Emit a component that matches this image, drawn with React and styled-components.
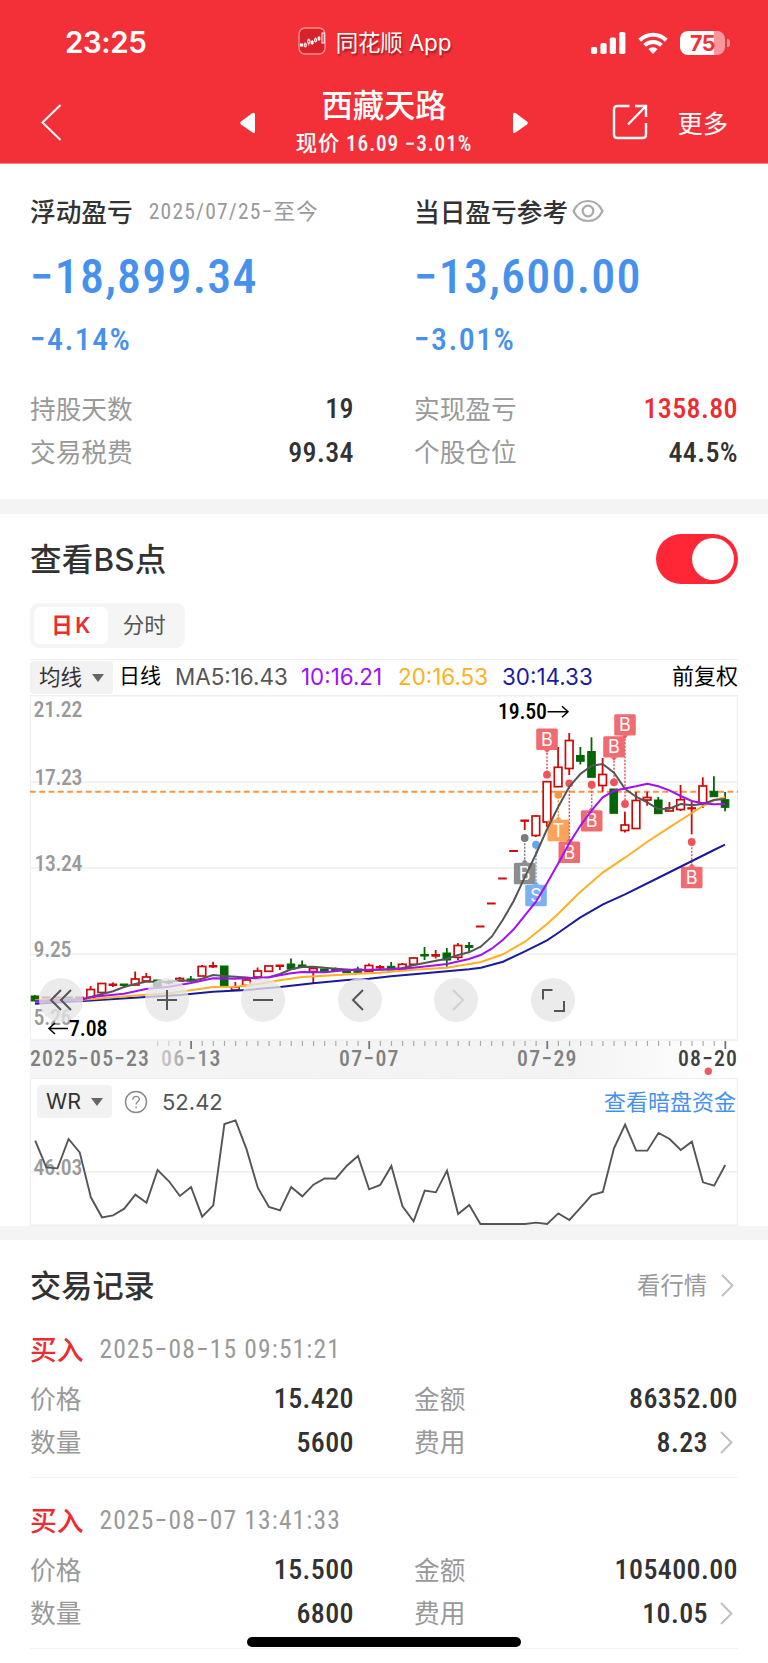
import React from "react";
import styled, { createGlobalStyle } from "styled-components";

const GlobalStyle = createGlobalStyle`
  * {
    box-sizing: border-box;
  }
  body {
    margin: 0;
    background: #fff;
    font-family: Roboto, "Noto Sans CJK SC", sans-serif;
    color: #323232;
  }
`;

const Page = styled.div`
  position: relative;
  width: 768px;
  height: 1663px;
  overflow: hidden;
  background: #fff;
`;

const Header = styled.header`
  height: 164px;
  background: #f33038;
  border-bottom: 1px solid #f88;
  color: #fff;
`;

const StatusBar = styled.div`
  display: grid;
  grid-template-columns: 1fr auto 1fr;
  align-items: center;
  height: 85px;
  padding: 0 38px 0 65px;
`;

const Clock = styled.div`
  padding-bottom: 1px;
  font-family: Inter, sans-serif;
  font-size: 29.5px;
  font-weight: 600;
  letter-spacing: -0.4px;
`;

const AppTag = styled.div`
  display: flex;
  align-items: center;
  gap: 10px;
  padding-bottom: 3px;
  font-family: Inter, "Noto Sans CJK SC", sans-serif;
  font-size: 22.5px;
  letter-spacing: -0.2px;
  text-shadow: 1px 2px 2px rgba(90, 0, 0, 0.55);
  transform: translateX(-23px);
  white-space: nowrap;
  svg {
    display: block;
  }
`;

const StatusIcons = styled.div`
  display: flex;
  justify-content: flex-end;
  align-items: center;
  gap: 12px;
`;

const BatteryBox = styled.div`
  display: flex;
  align-items: center;
  gap: 2px;
  &::after {
    content: "";
    width: 3px;
    height: 8px;
    border-radius: 0 3px 3px 0;
    background: rgba(255, 255, 255, 0.5);
  }
`;

const Battery = styled.div`
  width: 45px;
  height: 24px;
  border-radius: 8px;
  background: linear-gradient(90deg, #fff 76%, rgba(255, 255, 255, 0.5) 76%);
  color: #f33038;
  font: 700 21.5px/24px Inter, sans-serif;
  letter-spacing: -0.6px;
  text-align: center;
`;

const NavBar = styled.div`
  display: grid;
  grid-template-columns: 200px 1fr 200px;
  align-items: center;
  height: 76px;
  padding: 0 40px;
`;

const NavTitle = styled.div`
  display: flex;
  justify-content: space-between;
  align-items: center;
  h1 {
    margin: 0;
    font-size: 31.3px;
    line-height: 40px;
    font-weight: 500;
  }
  p {
    margin: 0;
    font-size: 21.3px;
    line-height: 34px;
    font-weight: 500;
    font-stretch: 85%;
    letter-spacing: 0.9px;
  }
  div {
    padding-top: 2px;
    text-align: center;
  }
`;

const NavActions = styled.div`
  display: flex;
  justify-content: flex-end;
  align-items: center;
  gap: 29px;
  padding-bottom: 2px;
  font-size: 25.3px;
`;

const Split = styled.div`
  display: grid;
  grid-template-columns: 323px 323px;
  column-gap: 61px;
`;

const Summary = styled.section`
  height: 335px;
  padding: 27px 30px 0;
`;

const Caption = styled.div`
  display: flex;
  align-items: center;
  height: 38px;
  font-size: 25.7px;
  font-weight: 500;
  svg {
    margin: 1px 0 0 4px;
  }
`;

const Period = styled.span`
  margin: 0 0 1px 16px;
  font-size: 21.5px;
  font-weight: 400;
  font-stretch: 85%;
  letter-spacing: 1.2px;
  color: #999;
`;

const Amount = styled.div`
  height: 60px;
  margin-top: 18px;
  line-height: 60px;
  font-size: 48px;
  font-weight: 500;
  font-stretch: 85%;
  letter-spacing: 1.2px;
  color: #4691ee;
`;

const Percent = styled.div`
  height: 40px;
  margin: 12px 0 28px;
  line-height: 40px;
  font-size: 32px;
  font-weight: 500;
  font-stretch: 85%;
  letter-spacing: 1.4px;
  color: #4691ee;
`;

const Field = styled.div`
  display: flex;
  align-items: center;
  justify-content: space-between;
  height: 43.5px;
  padding-bottom: 3px;
  font-size: 25.7px;
  color: #999;
`;

const Value = styled.span`
  display: flex;
  align-items: center;
  margin-right: -1px;
  padding-top: 3px;
  font-size: 28px;
  font-weight: 500;
  font-stretch: 85%;
  letter-spacing: 0.4px;
  color: ${(props) => (props.$up ? "#ee2b30" : "#323232")};
  svg {
    margin: 0 5px 0 12px;
  }
`;

const Band = styled.div`
  height: ${(props) => props.$height}px;
  background: #f4f4f4;
`;

const ChartSection = styled.section`
  height: 712px;
  padding: 0 30px;
`;

const SwitchRow = styled.div`
  display: flex;
  align-items: center;
  justify-content: space-between;
  height: 89px;
  font: 500 31.5px Inter, "Noto Sans CJK SC", sans-serif;
`;

const SwitchTitle = styled.span`
  padding-bottom: 4px;
  letter-spacing: 0.2px;
`;

const Switch = styled.div`
  display: flex;
  justify-content: flex-end;
  width: 82px;
  height: 50px;
  padding: 4px;
  border-radius: 25px;
  background: #ff2635;
  &::after {
    content: "";
    width: 42px;
    height: 42px;
    border-radius: 50%;
    background: #fff;
  }
`;

const Tabs = styled.div`
  display: flex;
  width: 155px;
  height: 45px;
  padding: 4px;
  border-radius: 9px;
  background: #f5f5f5;
`;

const Tab = styled.div`
  width: 74px;
  border-radius: 6px;
  background: ${(props) => (props.$on ? "#fff" : "transparent")};
  color: ${(props) => (props.$on ? "#ee2b30" : "#555")};
  font: ${(props) => (props.$on ? 600 : 400)} 21.5px/36px Inter,
    "Noto Sans CJK SC", sans-serif;
  word-spacing: -3px;
  text-align: center;
`;

const Legend = styled.div`
  display: flex;
  align-items: center;
  height: 36px;
  margin-top: 11px;
  border-top: 1.5px solid #eee;
  font: 400 22px/30px Inter, "Noto Sans CJK SC", sans-serif;
  white-space: nowrap;
  color: #000;
`;

const Picker = styled.div`
  display: flex;
  align-items: center;
  justify-content: space-between;
  width: ${(props) => props.$width}px;
  height: 33px;
  padding: 0 9px 2px;
  border-radius: 4px;
  background: #f2f2f2;
  color: #333;
  font-size: 21.5px;
  &::after {
    content: "";
    margin-top: 2px;
    border: 6px solid transparent;
    border-top: 8px solid #666;
    border-bottom: 0;
  }
`;

const Cycle = styled.span`
  width: 62px;
  padding: 0 0 3px 6px;
  font-size: 21px;
`;

const Ma = styled.span`
  width: ${(props) => props.$width}px;
  padding-bottom: 1px;
  font-size: 22.4px;
  color: ${(props) => props.$color};
`;

const Adjust = styled.span`
  margin-left: auto;
  padding-bottom: 3px;
`;

const KLine = styled.div`
  position: relative;
  height: 383px;
`;

/* floating controls over the bottom of the k-line */
const Controls = styled.div`
  position: absolute;
  left: 9px;
  top: 283px;
  display: flex;
  gap: 52.5px;
`;

const RoundButton = styled.div`
  display: flex;
  align-items: center;
  justify-content: center;
  width: 44px;
  height: 44px;
  margin-right: ${(props) => props.$extra || 0}px;
  border-radius: 50%;
  background: rgba(230, 230, 230, 0.78);
`;

const LowPoint = styled.svg`
  position: absolute;
  left: 16px;
  top: 318px;
`;

const Indicator = styled.div`
  position: relative;
  height: 148px;
  > svg {
    display: block;
  }
`;

const IndicatorBar = styled.div`
  position: absolute;
  left: 0;
  top: 7px;
  right: 2px;
  display: flex;
  align-items: center;
  height: 33px;
  padding-left: 7px;
  font: 400 22px Inter, "Noto Sans CJK SC", sans-serif;
  color: #555;
  svg {
    margin: 0 14px 0 12px;
  }
`;

const Link = styled.span`
  margin-left: auto;
  padding-bottom: 4px;
  color: #4691ee;
`;

const Records = styled.section`
  padding: 0 30px;
`;

const RecordsHead = styled.div`
  display: flex;
  align-items: center;
  height: 67px;
  padding-top: 21px;
  h2 {
    margin: 0;
    padding-bottom: 2px;
    flex: 1;
    font-size: 31.2px;
    font-weight: 500;
  }
  span {
    font-size: 23.3px;
    color: #999;
  }
  svg {
    margin: 2px 4px 0 14px;
  }
`;

const Record = styled.div`
  height: 171px;
  padding-top: 24px;
  border-bottom: 1.5px solid #f3f3f3;
`;

const RecordHead = styled.div`
  display: flex;
  align-items: center;
  height: 36px;
  margin-bottom: 10px;
  b {
    margin-right: 16px;
    padding-bottom: 2px;
    font-size: 26.8px;
    font-weight: 500;
    color: #ee2b30;
  }
  span {
    font-size: 25.5px;
    font-stretch: 85%;
    letter-spacing: 1.15px;
    color: #999;
  }
`;

const HomeBar = styled.div`
  position: absolute;
  left: 247px;
  bottom: 16px;
  width: 274px;
  height: 10px;
  border-radius: 5px;
  background: #000;
`;

const STEP = 11.13;
const RED = "#cc0a0a";
const GREEN = "#046504";

// [up, high, body top, body bottom, low]
const CANDLES = [
  [0, 995, 996, 1001, 1001], [1, 997, 997, 998, 998], [1, 997, 997, 998, 998],
  [0, 997, 997, 998, 998], [1, 997, 997, 998, 998], [1, 986, 989.5, 998, 998],
  [1, 983, 983.5, 992.5, 993], [1, 982.5, 984, 985.5, 987], [0, 984, 984, 985.5, 988],
  [1, 971.5, 979, 985, 985], [1, 973, 977, 981, 981], [0, 980, 980, 987, 987],
  [0, 980, 981.5, 983, 984.5], [1, 977, 978.5, 981, 981], [0, 976, 979, 981, 981],
  [1, 965, 966.5, 976, 976], [1, 961.7, 965.5, 967, 968], [0, 966, 966, 985.7, 986],
  [1, 982, 987, 990, 990], [1, 978, 980, 985.5, 986], [1, 967.5, 971, 977, 977],
  [1, 966, 966, 971.3, 971], [1, 965, 965, 966.5, 970], [0, 958.5, 964, 969, 969],
  [0, 960.5, 965, 967, 967], [1, 968, 968.5, 971.5, 983], [0, 969, 969, 971.7, 972],
  [0, 967.5, 969, 970.5, 971], [0, 969, 969.5, 972.7, 973], [0, 966.7, 969, 972.3, 973],
  [1, 963.5, 965.5, 971.5, 972], [1, 965, 966.5, 968, 969], [0, 962, 966.3, 970, 970],
  [1, 963, 964.3, 970, 970], [1, 957, 958, 964.3, 964.3], [0, 947, 954.5, 956, 960],
  [1, 950, 954.5, 956.2, 958.5], [0, 948, 953, 960, 966.7], [1, 943, 945.5, 957.3, 960],
  [0, 942, 945.5, 947.5, 951.7], [1, 926, 926, 927, 927], [1, 903, 903, 904, 904],
  [1, 878, 878, 879, 879], [1, 850.5, 850.5, 851.5, 851], [1, 820, 820, 821.3, 830],
  [1, 815, 816, 835.5, 837], [1, 781, 781.7, 822, 827], [1, 747, 767.3, 786.7, 787],
  [1, 733, 740.5, 768.5, 775], [0, 747, 755.5, 761.3, 764.5], [0, 737.3, 751.5, 777.3, 777],
  [1, 758, 774.5, 785.5, 791.7], [0, 789, 789, 813.3, 813], [1, 811.7, 825, 830.5, 832.5],
  [1, 792, 800.5, 828.5, 829], [1, 791.7, 797.5, 800, 805.7], [0, 797, 800, 813.7, 813],
  [1, 802, 808, 811, 811], [1, 785, 799.7, 809.5, 811], [1, 801.7, 807.7, 809, 834.3],
  [1, 777.3, 786, 803, 808], [0, 776.3, 791.3, 796.7, 796], [0, 792, 799.7, 807.3, 811.3],
];

const AVERAGES = [
  {
    color: "#1a1aa0",
    points:
      "35,1003.7 83,1001 146,997 180,995 213,991.7 247,990 280,987 313,983.3 347,980 369,978.7 391,976.3 425,973.3 469,969.3 481,967.7 503,961.7 525,951.3 547,940.3 558,933 580,917.7 603,904.3 625,894.3 658,878 692,861 714,850 725,844.7",
  },
  {
    color: "#ffb020",
    points:
      "35,1000.3 83,999.7 146,994.7 169,993.3 191,990.3 213,987 235,986.7 258,984 280,980.3 302,977 325,975.7 358,973.7 380,972.7 413,969.7 447,967.7 481,962 503,954.3 525,941.7 547,924 558,914 580,892.3 603,872.3 625,857.7 647,842 669,827.7 692,813 703,806 714,800.3 725,797",
  },
  {
    color: "#555",
    points:
      "35,1001 83,999 91,997 113,991.3 124,987 135,984 146,981.7 169,981.7 180,980.3 191,981 202,978.7 213,975 224,976 247,977.5 258,978.7 269,977.3 280,974 291,969.3 302,967 313,966.7 336,968.7 358,970.3 380,969.7 402,968.3 413,965.3 436,960.7 447,958.7 458,955 469,952.3 480.7,946.7 491.7,936.7 502.7,920 513.7,901 524.7,877.3 536,854 547,829.3 558.3,806.7 569.3,786.7 580.3,774 591.7,765.7 602.7,764 614,772.7 625,788.7 636,796.7 647.3,802.3 658.3,809 669.3,808.7 680.7,804 691.7,805.3 702.7,804 714,800 725,799",
  },
  {
    color: "#a010f8",
    points:
      "35,1001.7 83,999.3 91,997 124,993.7 146,989 169,986.7 191,983 213,978.3 235,978.7 269,977.3 291,973.3 302,972 325,972.3 347,970 369,969.7 391,969.3 413,967.7 436,965.3 447,964 469,959 480.7,955 491.7,948.7 502.7,940 513.7,929.3 524.7,915.7 536,901.7 547,883.3 558.3,863.3 569.3,843.3 580.3,825.7 591.7,810.3 602.7,797.3 614,790.7 636,786.3 647.3,783.7 658.3,786.3 669.3,790.3 680.7,796 691.7,801 702.7,803.3 714,804.3 725,804",
  },
];

// letter, x, box centre y, dot y, colour
const MARKS = [
  ["B", 524.7, 873.3, 838, "#7b7b7b"],
  ["S", 536, 895.3, 844.7, "#66a5f2"],
  ["B", 547, 739, 774.7, "#ee5459"],
  ["T", 558.3, 830.3, 794.7, "#ff9440"],
  ["B", 569.3, 852, 783.3, "#ee5459"],
  ["B", 591.7, 820.7, 784.7, "#ee5459"],
  ["B", 614, 746.7, 782.3, "#ee5459"],
  ["B", 625, 724.7, 804, "#ee5459"],
  ["B", 691.7, 877.3, 842, "#ee5459"],
];

const WR = [
  212, 292, 295, 207, 247, 382, 442, 436, 416, 374, 398, 300, 333, 378, 351,
  440, 406, 162, 151, 239, 353, 411, 421, 351, 379, 344, 325, 326, 287, 258,
  358, 345, 288, 409, 454, 362, 367, 302, 432, 405, 462, 462, 462, 462, 462,
  458, 462, 430, 450, 413, 375, 366, 235, 164, 242, 242, 189, 207, 240, 215,
  337, 347, 285,
];

const RECORDS = [
  { time: "2025−08−15 09:51:21", price: "15.420", count: "5600", total: "86352.00", fee: "8.23" },
  { time: "2025−08−07 13:41:33", price: "15.500", count: "6800", total: "105400.00", fee: "10.05" },
];

const Chevron = () => (
  <svg width="13" height="23" viewBox="0 0 13 23" fill="none">
    <path d="M1 1l10.5 10.5L1 22" stroke="#bdbdbd" strokeWidth="1.8" />
  </svg>
);

const ChartText = styled.text`
  font-family: Roboto, sans-serif;
  font-size: 21.8px;
  font-weight: 500;
  font-stretch: 85%;
`;

const Label = ({ x, y, width, fill = "#999", children }) => (
  <ChartText x={x} y={y} textLength={width} fill={fill}>
    {children}
  </ChartText>
);

const Candle = ({ index, data }) => {
  const [up, high, top, bottom, low] = data;
  const x = 35 + STEP * index;
  const color = up ? RED : GREEN;
  const hollow = up && bottom - top > 2.2;
  return (
    <g stroke={color} strokeWidth="1.8">
      {high < top && <line x1={x} x2={x} y1={high} y2={top} />}
      {low > bottom && <line x1={x} x2={x} y1={bottom} y2={low} />}
      <rect
        x={x - 3.8}
        y={top}
        width="7.6"
        height={bottom - top}
        fill={hollow ? "#fff" : color}
        strokeWidth={hollow ? 1.7 : 1}
      />
    </g>
  );
};

const Mark = ({ data }) => {
  const [letter, x, y, dot, color] = data;
  const dir = dot > y ? 1 : -1;
  const edge = y + dir * 10.5;
  return (
    <g>
      <line
        x1={x}
        x2={x}
        y1={edge}
        y2={dot}
        stroke={color}
        strokeWidth="1.5"
        strokeDasharray="2 1.5"
      />
      <circle cx={x} cy={dot} r="3.9" fill={color} />
      <g fill={color} opacity="0.86">
        <rect x={x - 10.8} y={y - 10.5} width="21.6" height="21.4" rx="1.5" />
        <path d={`M${x - 3.5} ${edge}h7l-3.5 ${dir * 3.5}z`} />
      </g>
      <text
        x={x}
        y={y + 6.7}
        textAnchor="middle"
        fontFamily="Inter, sans-serif"
        fontSize="18"
        fill="#fff"
      >
        {letter}
      </text>
    </g>
  );
};

const KLineChart = () => (
  <svg width="708" height="383" viewBox="30 695 708 383">
    <defs>
      <linearGradient id="axis">
        <stop offset="0" stopColor="#f5f5f5" />
        <stop offset="0.75" stopColor="#f3f3f3" />
        <stop offset="1" stopColor="#fff" />
      </linearGradient>
      <linearGradient id="fade" gradientUnits="userSpaceOnUse" x1="160" x2="210">
        <stop offset="0" stopColor="#ccc" />
        <stop offset="1" stopColor="#808080" />
      </linearGradient>
    </defs>
    <rect x="30" y="1040" width="708" height="39" fill="url(#axis)" />
    <g stroke="#eee" strokeWidth="1.5" fill="none">
      <rect x="30.2" y="695.7" width="707.3" height="344.3" />
      <path d="M30 782h708M30 868h708M30 954.3h708" />
    </g>
    <line x1="30" x2="738" y1="791.7" y2="791.7" stroke="#ff9440" strokeWidth="2" strokeDasharray="5.8 3.5" />
    <Label x={33.5} y={717.3} width={49}>21.22</Label>
    <Label x={34.5} y={785} width={48}>17.23</Label>
    <Label x={34.5} y={871} width={48}>13.24</Label>
    <Label x={33.5} y={957.3} width={38}>9.25</Label>
    <Label x={33.5} y={1025} width={38}>5.26</Label>
    {CANDLES.map((item, i) => (
      <Candle key={i} index={i} data={item} />
    ))}
    {MARKS.map((item, i) => (
      <Mark key={i} data={item} />
    ))}
    {AVERAGES.map((line) => (
      <polyline key={line.color} points={line.points} fill="none" stroke={line.color} strokeWidth="2" />
    ))}
    <Label x={498} y={719} width={49} fill="#000">19.50</Label>
    <path d="M547.5 711.7h20.5M562 706.2l6 5.5-6 5.5" fill="none" stroke="#000" strokeWidth="1.5" />
    {Array.from({ length: 52 }, (_, k) => k + 11).map((i) => {
      const major = i % 16 === 14;
      return (
        <line
          key={i}
          x1={35.3 + STEP * i}
          x2={35.3 + STEP * i}
          y1="1041"
          y2={major ? 1049 : 1046}
          stroke={major ? "#777" : "#aaa"}
          strokeWidth={major ? 1.8 : 1.2}
          opacity={i < 13 ? 0.5 : 1}
        />
      );
    })}
    <Label x={30} y={1065.5} width={119} fill="#808080">2025−05−23</Label>
    <Label x={161} y={1065.5} width={59.5} fill="url(#fade)">06−13</Label>
    <Label x={339} y={1065.5} width={59.5} fill="#808080">07−07</Label>
    <Label x={517} y={1065.5} width={59.5} fill="#808080">07−29</Label>
    <Label x={678} y={1065.5} width={59} fill="#404040">08−20</Label>
    <circle cx="708.3" cy="1071.3" r="3.7" fill="#f5595e" />
  </svg>
);

const WrChart = () => (
  <svg width="708" height="148" viewBox="0 0 708 148">
    <rect x="0.2" y="0.3" width="707.3" height="147" fill="#fff" stroke="#eee" strokeWidth="1.5" />
    <line x1="0" x2="708" y1="93.7" y2="93.7" stroke="#eee" strokeWidth="1.5" />
    <Label x={3.5} y={97} width={49}>46.03</Label>
    <polyline
      points={WR.map((v, i) => `${5.2 + STEP * i},${v / 3 - 8}`).join(" ")}
      fill="none"
      stroke="#555"
      strokeWidth="1.9"
    />
  </svg>
);

const ControlIcon = ({ d, color = "#555" }) => (
  <svg width="26" height="26" viewBox="0 0 26 26" fill="none" stroke={color} strokeWidth="2">
    <path d={d} />
  </svg>
);

const App = () => {
  return (
    <Page>
      <GlobalStyle />
      <Header>
        <StatusBar>
          <Clock>23:25</Clock>
          <AppTag>
            <svg width="28" height="28" viewBox="0 0 28 28" fill="none">
              <rect x="1" y="1" width="26" height="26" rx="6" fill="#d8222a" stroke="#ff8f93" strokeWidth="1.4" />
              <g stroke="#fff" strokeWidth="1">
                <path d="M7.2 15.5v5M10.8 11.5v7M14.2 13v5M17.6 10.5v5M21 9v5" />
                <path d="M2 18h3M12.8 15.5h2.8M19.7 11.5h2.6" strokeWidth="3" />
                <rect x="6.2" y="17" width="2" height="2.2" fill="#d8222a" />
                <rect x="9.8" y="13" width="2" height="3" fill="#d8222a" />
                <rect x="16.6" y="12" width="2" height="2.2" fill="#d8222a" />
                <rect x="24" y="6" width="2.2" height="10" fill="#d8222a" />
              </g>
            </svg>
            同花顺 App
          </AppTag>
          <StatusIcons>
            <svg width="35" height="22" viewBox="0 0 35 22" fill="#fff">
              <rect x="0" y="15" width="6.2" height="7" rx="1.8" />
              <rect x="9.4" y="11" width="6.2" height="11" rx="1.8" />
              <rect x="18.8" y="5.5" width="6.2" height="16.5" rx="1.8" />
              <rect x="28.2" y="0" width="6.2" height="22" rx="1.8" />
            </svg>
            <svg width="30" height="22" viewBox="0 0 30 22" fill="none" stroke="#fff" strokeWidth="4">
              <path d="M1.7 8.2a19 19 0 0 1 26.6 0" />
              <path d="M6.6 13.4a12 12 0 0 1 16.8 0" />
              <path d="M15 22l-4.6-5a6.6 6.6 0 0 1 9.2 0z" fill="#fff" stroke="none" />
            </svg>
            <BatteryBox>
              <Battery>75</Battery>
            </BatteryBox>
          </StatusIcons>
        </StatusBar>
        <NavBar>
          <svg width="24" height="38" viewBox="0 0 24 38" fill="none">
            <path d="M20.5 1L2.5 18.5l18 17.5" stroke="#fff" strokeWidth="2" />
          </svg>
          <NavTitle>
            <svg width="16" height="22" viewBox="0 0 16 22" fill="#fff">
              <path d="M15 2.5v17q0 2.5-2.5 1L1 12.5q-1.5-1.5 0-3L12.5 1q2.5-1 2.5 1.5z" />
            </svg>
            <div>
              <h1>西藏天路</h1>
              <p>现价 16.09 −3.01%</p>
            </div>
            <svg width="16" height="22" viewBox="0 0 16 22" fill="#fff">
              <path d="M1 2.5v17q0 2.5 2.5 1L15 12.5q1.5-1.5 0-3L3.5 1q-2.5-1-2.5 1.5z" />
            </svg>
          </NavTitle>
          <NavActions>
            <svg width="36" height="36" viewBox="0 0 36 36" fill="none" stroke="#fff" strokeWidth="2.4">
              <path d="M17.5 2h-12Q2 2 2 5.5v25Q2 34 5.5 34h25q3.5 0 3.5-3.5V19" />
              <path d="M23 2h11v11M33.5 2.5L16 20.5" />
            </svg>
            更多
          </NavActions>
        </NavBar>
      </Header>

      <Summary>
        <Split>
          <div>
            <Caption>
              浮动盈亏<Period>2025/07/25−至今</Period>
            </Caption>
            <Amount>−18,899.34</Amount>
            <Percent>−4.14%</Percent>
            <Field>
              持股天数<Value>19</Value>
            </Field>
            <Field>
              交易税费<Value>99.34</Value>
            </Field>
          </div>
          <div>
            <Caption>
              当日盈亏参考
              <svg width="32" height="24" viewBox="0 0 32 24" fill="none" stroke="#aaa" strokeWidth="2.2">
                <path d="M1.5 12C4.5 5.5 10 2 16 2s11.5 3.5 14.5 10c-3 6.5-8.5 10-14.5 10S4.5 18.5 1.5 12z" />
                <circle cx="16" cy="12" r="5.3" />
              </svg>
            </Caption>
            <Amount>−13,600.00</Amount>
            <Percent>−3.01%</Percent>
            <Field>
              实现盈亏<Value $up>1358.80</Value>
            </Field>
            <Field>
              个股仓位<Value>44.5%</Value>
            </Field>
          </div>
        </Split>
      </Summary>
      <Band $height={15} />

      <ChartSection>
        <SwitchRow>
          <SwitchTitle>查看BS点</SwitchTitle>
          <Switch />
        </SwitchRow>
        <Tabs>
          <Tab $on>日 K</Tab>
          <Tab>分时</Tab>
        </Tabs>
        <Legend>
          <Picker $width={83}>均线</Picker>
          <Cycle>日线</Cycle>
          <Ma $width={126} $color="#555">MA5:16.43</Ma>
          <Ma $width={97} $color="#a010f8">10:16.21</Ma>
          <Ma $width={104} $color="#ffb020">20:16.53</Ma>
          <Ma $width={95} $color="#1a1aa0">30:14.33</Ma>
          <Adjust>前复权</Adjust>
        </Legend>
        <KLine>
          <KLineChart />
          <Controls>
            <RoundButton $extra={9}>
              <ControlIcon d="M13 3L3 13l10 10M23 3L13 13l10 10" />
            </RoundButton>
            <RoundButton>
              <ControlIcon d="M3 13h20M13 3v20" />
            </RoundButton>
            <RoundButton>
              <ControlIcon d="M3 13h20" />
            </RoundButton>
            <RoundButton>
              <ControlIcon d="M16 3L6 13l10 10" />
            </RoundButton>
            <RoundButton>
              <ControlIcon d="M10 3l10 10-10 10" color="#d0d0d0" />
            </RoundButton>
            <RoundButton>
              <ControlIcon d="M12.5 3H3v9.5M24 14v10H14" />
            </RoundButton>
          </Controls>
          <LowPoint width="80" height="30" viewBox="46 1013 80 30">
            <path d="M68 1028.5H49M55 1023l-6 5.5 6 5.5" fill="none" stroke="#000" strokeWidth="1.5" />
            <Label x={69} y={1036} width={38.5} fill="#000">7.08</Label>
          </LowPoint>
        </KLine>
        <Indicator>
          <WrChart />
          <IndicatorBar>
            <Picker $width={75}>WR</Picker>
            <svg width="24" height="24" viewBox="0 0 24 24" fill="none" stroke="#888" strokeWidth="1.4">
              <circle cx="12" cy="12" r="10.5" />
              <path d="M8.8 9.8c0-4.5 6.5-4.5 6.5-.6 0 2.5-3.2 2.5-3.2 5.2M12.1 16.4v1.8" />
            </svg>
            52.42
            <Link>查看暗盘资金</Link>
          </IndicatorBar>
        </Indicator>
      </ChartSection>
      <Band $height={14} />

      <Records>
        <RecordsHead>
          <h2>交易记录</h2>
          <span>看行情</span>
          <Chevron />
        </RecordsHead>
        {RECORDS.map((item) => (
          <Record key={item.time}>
            <RecordHead>
              <b>买入</b>
              <span>{item.time}</span>
            </RecordHead>
            <Split>
              <Field>
                价格<Value>{item.price}</Value>
              </Field>
              <Field>
                金额<Value>{item.total}</Value>
              </Field>
              <Field>
                数量<Value>{item.count}</Value>
              </Field>
              <Field>
                费用
                <Value>
                  {item.fee}
                  <Chevron />
                </Value>
              </Field>
            </Split>
          </Record>
        ))}
      </Records>
      <HomeBar />
    </Page>
  );
};

export default App;
